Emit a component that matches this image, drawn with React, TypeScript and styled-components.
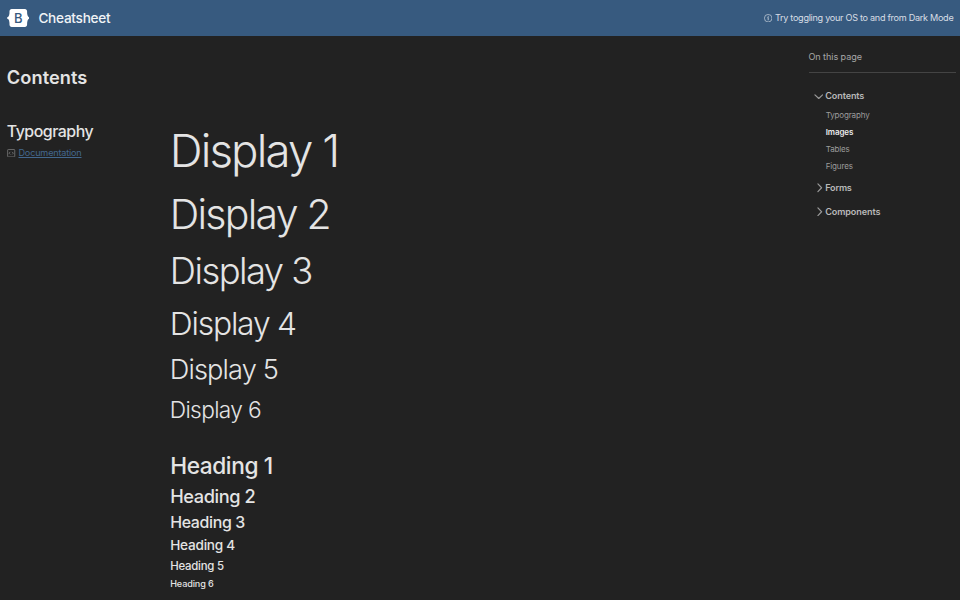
import React from "react";
import styled, { createGlobalStyle } from "styled-components";

const GlobalStyle = createGlobalStyle`
  * { box-sizing: border-box; margin: 0; padding: 0; }
  body {
    background: #222;
    color: #e4e4e4;
    font-family: Inter, "Liberation Sans", sans-serif;
    overflow: hidden;
    height: 600px;
  }
  ul { list-style: none; }
`;

const Header = styled.header`
  height: 36px;
  display: flex;
  align-items: center;
  justify-content: space-between;
  padding: 0 6.6px 0 6.6px;
  background: #375a7f;
`;

const Brand = styled.div`
  display: flex;
  align-items: center;
  gap: 9.2px;
  color: #f0f3f6;
  svg { display: block; }
`;

const BrandName = styled.h1`
  font-size: 13.6px;
  font-weight: 500;
  line-height: 18px;
  letter-spacing: -0.25px;
`;

const Notice = styled.small`
  display: flex;
  align-items: center;
  gap: 2.5px;
  font-size: 9.1px;
  line-height: 14px;
  letter-spacing: -0.286px;
  white-space: nowrap;
  color: #d7dee5;
  svg { display: block; }
`;

const Page = styled.div`
  display: grid;
  grid-template-columns: 1fr 151.5px;
`;

const Main = styled.main`
  padding: 29px 0 0 6.8px;
`;

const SectionTitle = styled.h2`
  font-size: 18.2px;
  font-weight: 600;
  line-height: 24px;
  letter-spacing: 0.08px;
`;

const Article = styled.article`
  display: grid;
  grid-template-columns: 163px 1fr;
  align-items: start;
  margin-top: 33px;
`;

const ArticleTitle = styled.h3`
  font-size: 15.9px;
  font-weight: 500;
  line-height: 19px;
  letter-spacing: -0.48px;
`;

const DocLink = styled.a`
  display: flex;
  align-items: center;
  gap: 2.8px;
  margin-top: 5px;
  font-size: 9.1px;
  line-height: 14px;
  letter-spacing: -0.18px;
  color: #43688f;
  svg { display: block; color: #7c7c7c; margin-left: 0.5px; }
  span { text-decoration: underline; text-decoration-thickness: 1px; text-underline-offset: 1px; }
`;

const Example = styled.div`
  display: flex;
  flex-direction: column;
  padding-top: 1.4px;
`;

const Display = styled.p<{ $size: number; $box: number; $track: number }>`
  font-size: ${(p) => p.$size}px;
  line-height: ${(p) => p.$box}px;
  letter-spacing: ${(p) => p.$track}px;
  font-weight: 300;
  margin-bottom: 9.7px;
  white-space: nowrap;
`;

const Headings = styled.div`
  display: flex;
  flex-direction: column;
  gap: 4.85px;
  margin-top: 18.2px;
  padding-left: 0.4px;
`;

const Heading = styled.p<{ $size: number; $box: number; $track: number }>`
  font-size: ${(p) => p.$size}px;
  line-height: ${(p) => p.$box}px;
  letter-spacing: ${(p) => p.$track}px;
  font-weight: 500;
`;

const Aside = styled.aside`
  padding: 14px 4px 0 0;
`;

const AsideTitle = styled.h2`
  padding-bottom: 8px;
  border-bottom: 1px solid #444;
  font-size: 9.1px;
  font-weight: 400;
  line-height: 14px;
  letter-spacing: -0.09px;
  color: #a6a6a6;
`;

const Toc = styled.ul`
  display: flex;
  flex-direction: column;
  gap: 9.5px;
  padding: 16px 0 0 5px;
`;

const TocGroup = styled.button<{ $track: number }>`
  display: flex;
  align-items: center;
  gap: 2.2px;
  border: 0;
  background: none;
  font: 600 9.1px/14px Inter, "Liberation Sans", sans-serif;
  letter-spacing: ${(p) => p.$track}px;
  color: #b8b8b8;
  svg { display: block; color: #999; }
`;

const TocLinks = styled.ul`
  padding: 4px 0 0 12.2px;
`;

const TocLink = styled.li<{ $active?: boolean }>`
  font-size: 8px;
  line-height: 17px;
  letter-spacing: ${(p) => (p.$active ? -0.1 : -0.14)}px;
  font-weight: ${(p) => (p.$active ? 600 : 400)};
  color: ${(p) => (p.$active ? "#ececec" : "#9c9c9c")};
  &:last-child { margin-bottom: -3.5px; }
`;

const Logo = () => (
  <svg width="22.6" height="18" viewBox="0 0 118 94">
    <path
      fill="#fff"
      d="M24.509 0c-6.733 0-11.715 5.893-11.492 12.284.214 6.14-.064 14.092-2.066 20.577C8.943 39.365 5.547 43.485 0 44.014v5.972c5.547.529 8.943 4.649 10.951 11.153 2.002 6.485 2.28 14.437 2.066 20.577C12.794 88.106 17.776 94 24.51 94H93.5c6.733 0 11.714-5.893 11.491-12.284-.214-6.14.064-14.092 2.066-20.577 2.009-6.504 5.396-10.624 10.943-11.153v-5.972c-5.547-.529-8.934-4.649-10.943-11.153-2.002-6.484-2.28-14.437-2.066-20.577C105.214 5.894 100.233 0 93.5 0H24.508z"
    />
    <text x="59" y="71.5" textAnchor="middle" fontFamily="Inter" fontWeight="500" fontSize="68" fill="#375a7f">
      B
    </text>
  </svg>
);

const InfoIcon = () => (
  <svg width="8.4" height="8.4" viewBox="0 0 16 16" fill="none" stroke="currentColor">
    <circle cx="8" cy="8" r="7.2" strokeWidth="1.2" />
    <path d="M8 6.6V12M6.6 7h1.6" strokeWidth="1.5" />
    <circle cx="8" cy="4.4" r="0.5" strokeWidth="1" />
  </svg>
);

const DocIcon = () => (
  <svg width="8.4" height="8.4" viewBox="0 0 16 16" fill="none" stroke="currentColor" strokeWidth="1.5">
    <rect x="1.2" y="0.9" width="13.6" height="14.2" rx="1.2" />
    <path d="M6.3 5.5 3.9 8l2.4 2.5M9.7 5.5 12.1 8l-2.4 2.5" />
  </svg>
);

const Chevron = ({ open }: { open?: boolean }) => (
  <svg width="9.5" height="9.5" viewBox="0 0 16 16" fill="none" stroke="currentColor" strokeWidth="2" strokeLinecap="round" strokeLinejoin="round">
    <path d={open ? "M1.6 6.6 8 12.6l6.4-6" : "M6.6 1.6 12.8 8 6.6 14.4"} />
  </svg>
);

const displays: [string, number, number, number][] = [
  ["Display 1", 45.6, 56.2, -1.88],
  ["Display 2", 41, 50.5, -1.75],
  ["Display 3", 36.4, 44.9, -1.53],
  ["Display 4", 31.8, 39.3, -1.19],
  ["Display 5", 27.2, 33.7, -0.88],
  ["Display 6", 22.7, 28.1, -0.66],
];

const headings: [string, number, number, number][] = [
  ["Heading 1", 22.7, 28.1, -0.42],
  ["Heading 2", 18.2, 22.5, -0.41],
  ["Heading 3", 15.9, 19.7, -0.33],
  ["Heading 4", 13.6, 16.8, -0.23],
  ["Heading 5", 11.4, 14, -0.24],
  ["Heading 6", 9.1, 11.2, -0.12],
];

const links = ["Typography", "Images", "Tables", "Figures"];

export default function App() {
  return (
    <>
      <GlobalStyle />
      <Header>
        <Brand>
          <Logo />
          <BrandName>Cheatsheet</BrandName>
        </Brand>
        <Notice>
          <InfoIcon />
          Try toggling your OS to and from Dark Mode
        </Notice>
      </Header>
      <Page>
        <Main>
          <SectionTitle>Contents</SectionTitle>
          <Article>
            <div>
              <ArticleTitle>Typography</ArticleTitle>
              <DocLink>
                <DocIcon />
                <span>Documentation</span>
              </DocLink>
            </div>
            <Example>
              {displays.map(([text, size, box, track]) => (
                <Display key={text} $size={size} $box={box} $track={track}>{text}</Display>
              ))}
              <Headings>
                {headings.map(([text, size, box, track]) => (
                  <Heading key={text} $size={size} $box={box} $track={track}>{text}</Heading>
                ))}
              </Headings>
            </Example>
          </Article>
        </Main>
        <Aside>
          <AsideTitle>On this page</AsideTitle>
          <Toc>
            <li>
              <TocGroup $track={-0.12}><Chevron open />Contents</TocGroup>
              <TocLinks>
                {links.map((text) => (
                  <TocLink key={text} $active={text === "Images"}>{text}</TocLink>
                ))}
              </TocLinks>
            </li>
            <li>
              <TocGroup $track={-0.2}><Chevron />Forms</TocGroup>
            </li>
            <li>
              <TocGroup $track={-0.11}><Chevron />Components</TocGroup>
            </li>
          </Toc>
        </Aside>
      </Page>
    </>
  );
}
